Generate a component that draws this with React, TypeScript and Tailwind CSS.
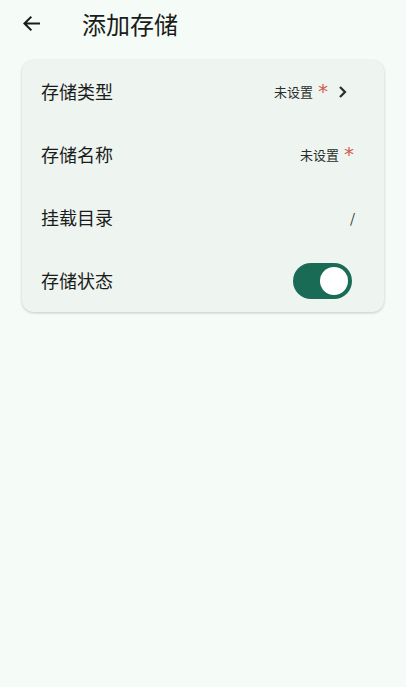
import React from "react";

function Star() {
  return (
    <span className="ml-[5px] text-[#d65a50] text-[20px] leading-none relative -top-[1px]" style={{ fontFamily: '"DejaVu Sans", sans-serif' }}>
      *
    </span>
  );
}

export default function App() {
  const font = { fontFamily: '"Noto Sans CJK SC", "Noto Sans", sans-serif' };
  return (
    <div className="w-[406px] h-[687px] bg-[#f5fbf7] text-[#191c1a]" style={font}>
      <div className="h-[47px] flex items-center">
        <div className="w-[64px] flex items-center pl-[21px]">
          <svg width="21" height="21" viewBox="0 0 24 24" fill="none">
            <path d="M20.5 12H4.5M11 5l-7 7 7 7" stroke="#191c1a" strokeWidth="2.4" strokeLinecap="square" />
          </svg>
        </div>
        <div className="ml-[18px] text-[24px] leading-none">添加存储</div>
      </div>
      <div className="mx-[22px] mt-[13px] rounded-[12px] bg-[#eef4f0] shadow-[0_1px_3px_rgba(0,0,0,0.2)]">
        <div className="h-[63px] flex items-center pl-[19px] pr-[36px]">
          <div className="text-[18px] flex-1">存储类型</div>
          <div className="text-[13px] text-[#2a2d2b]">未设置</div>
          <Star />
          <svg className="ml-[10px]" width="10" height="12" viewBox="0 0 10 12" fill="none">
            <path d="M2 1l5 5-5 5" stroke="#2a2d2b" strokeWidth="2.2" />
          </svg>
        </div>
        <div className="h-[63px] flex items-center pl-[19px] pr-[30px]">
          <div className="text-[18px] flex-1">存储名称</div>
          <div className="text-[13px] text-[#2a2d2b]">未设置</div>
          <Star />
        </div>
        <div className="h-[63px] flex items-center pl-[19px] pr-[29px]">
          <div className="text-[18px] flex-1">挂载目录</div>
          <div className="text-[13px]">/</div>
        </div>
        <div className="h-[63px] flex items-center pl-[19px] pr-[32px]">
          <div className="text-[18px] flex-1">存储状态</div>
          <div className="w-[59px] h-[36px] rounded-full bg-[#1a6b56] flex items-center justify-end pr-[4px]">
            <div className="w-[28px] h-[28px] rounded-full bg-white" />
          </div>
        </div>
      </div>
    </div>
  );
}
